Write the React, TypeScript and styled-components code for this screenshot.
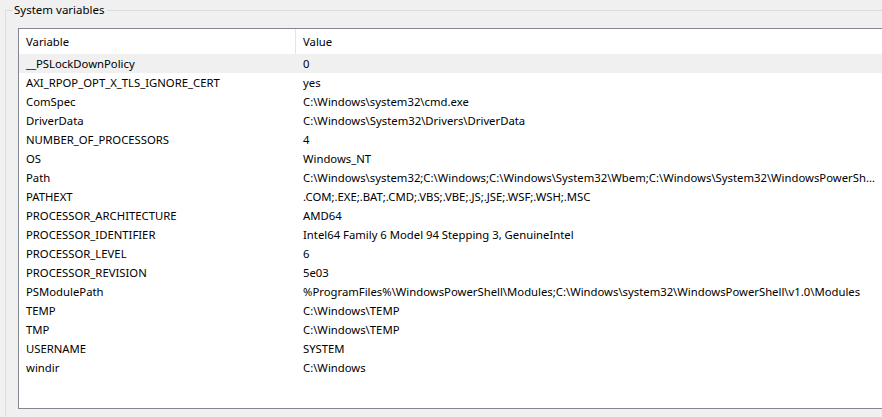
import React from "react";
import styled, { createGlobalStyle } from "styled-components";

const GlobalStyle = createGlobalStyle`
  html, body {
    margin: 0;
    padding: 0;
    background: #f0f0f0;
    overflow: hidden;
  }
  body {
    font-family: "Noto Sans", "Open Sans", sans-serif;
    font-size: 11.3px;
    color: #000;
  }
`;

const Page = styled.div`
  width: 882px;
  height: 417px;
  overflow: hidden;
  background: #f0f0f0;
  padding-left: 5px;
  box-sizing: border-box;
`;

const GroupBox = styled.fieldset`
  margin: 0;
  padding: 8px 0 0 12px;
  width: 1000px;
  height: 440px;
  border: 1px solid #dcdcdc;
  box-sizing: border-box;
`;

const Legend = styled.legend`
  padding: 0 2px;
  margin-left: -6px;
  line-height: 20px;
  font-size: 11.5px;
  color: #000;
`;

const ListView = styled.div`
  width: 1000px;
  height: 381px;
  background: #fff;
  border: 1px solid #828790;
  box-sizing: border-box;
`;

const Header = styled.div`
  display: grid;
  grid-template-columns: 277px 1fr;
  height: 25px;
  background: #fff;
`;

const HeaderCell = styled.div<{ $divider?: boolean }>`
  display: flex;
  align-items: center;
  padding-left: 7px;
  border-right: ${(p) => (p.$divider ? "1px solid #e5e5e5" : "none")};
`;

const Row = styled.div<{ $selected?: boolean }>`
  display: grid;
  grid-template-columns: 277px 586px;
  height: 19px;
  align-items: center;
  background: ${(p) => (p.$selected ? "#f0f0f0" : "#fff")};
`;

const Cell = styled.div`
  padding-left: 7px;
  padding-right: 2px;
  white-space: nowrap;
  overflow: hidden;
  text-overflow: ellipsis;
  line-height: 19px;
`;

const vars: [string, string][] = [
  ["__PSLockDownPolicy", "0"],
  ["AXI_RPOP_OPT_X_TLS_IGNORE_CERT", "yes"],
  ["ComSpec", "C:\\Windows\\system32\\cmd.exe"],
  ["DriverData", "C:\\Windows\\System32\\Drivers\\DriverData"],
  ["NUMBER_OF_PROCESSORS", "4"],
  ["OS", "Windows_NT"],
  [
    "Path",
    "C:\\Windows\\system32;C:\\Windows;C:\\Windows\\System32\\Wbem;C:\\Windows\\System32\\WindowsPowerShell\\v1.0\\;C:\\Windows\\System32\\OpenSSH\\",
  ],
  ["PATHEXT", ".COM;.EXE;.BAT;.CMD;.VBS;.VBE;.JS;.JSE;.WSF;.WSH;.MSC"],
  ["PROCESSOR_ARCHITECTURE", "AMD64"],
  ["PROCESSOR_IDENTIFIER", "Intel64 Family 6 Model 94 Stepping 3, GenuineIntel"],
  ["PROCESSOR_LEVEL", "6"],
  ["PROCESSOR_REVISION", "5e03"],
  [
    "PSModulePath",
    "%ProgramFiles%\\WindowsPowerShell\\Modules;C:\\Windows\\system32\\WindowsPowerShell\\v1.0\\Modules",
  ],
  ["TEMP", "C:\\Windows\\TEMP"],
  ["TMP", "C:\\Windows\\TEMP"],
  ["USERNAME", "SYSTEM"],
  ["windir", "C:\\Windows"],
];

const App: React.FC = () => {
  return (
    <Page>
      <GlobalStyle />
      <GroupBox>
        <Legend>System variables</Legend>
        <ListView>
          <Header>
            <HeaderCell $divider>Variable</HeaderCell>
            <HeaderCell>Value</HeaderCell>
          </Header>
          {vars.map(([name, value], i) => (
            <Row key={name} $selected={i === 0}>
              <Cell>{name}</Cell>
              <Cell>{value}</Cell>
            </Row>
          ))}
        </ListView>
      </GroupBox>
    </Page>
  );
};

export default App;
